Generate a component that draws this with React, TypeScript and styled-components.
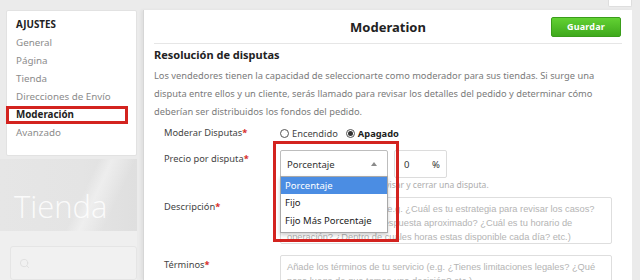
import { ReactElement } from 'react';
import styled, { createGlobalStyle } from 'styled-components';
import { Search } from 'lucide-react';

const GlobalStyle = createGlobalStyle`
    html, body {
        margin: 0;
        padding: 0;
    }

    body {
        background: #ebebeb;
        font-family: 'Noto Sans', 'Open Sans', sans-serif;
        width: 640px;
        height: 280px;
        overflow: hidden;
    }
`;

const Page = styled.div`
    width: 640px;
    height: 280px;
    display: flex;
    flex-direction: column;
    overflow: hidden;
`;

const TopStrip = styled.div`
    height: 10px;
    flex-shrink: 0;
    display: flex;
    justify-content: flex-end;
    padding-right: 8px;
`;

const CornerTab = styled.div`
    width: 22px;
    height: 6px;
    background: #fff;
    border: 1px solid #dedede;
    border-top: none;
    border-radius: 0 0 2px 2px;
`;

const Body = styled.div`
    display: flex;
    flex: 1;
    min-height: 0;
`;

const LeftCol = styled.aside`
    width: 137px;
    flex-shrink: 0;
    display: flex;
    flex-direction: column;
`;

const SideCard = styled.nav`
    margin-left: 6px;
    height: 147px;
    box-sizing: border-box;
    background: #fff;
    border: 1px solid #e2e2e2;
    border-radius: 2px;
    padding: 5px 0 0 9px;
`;

const SideItem = styled.div<{ $heading?: boolean; $active?: boolean }>`
    height: 18px;
    line-height: 18px;
    font-size: 9.8px;
    white-space: nowrap;
    color: ${p => (p.$heading || p.$active ? '#222' : '#8c8c8c')};
    font-weight: ${p => (p.$heading || p.$active ? 700 : 400)};
    ${p =>
        p.$active &&
        `
        margin-left: -10px;
        margin-right: 8px;
        padding-left: 10px;
        outline: 3px solid #d3231f;
        outline-offset: -3px;
    `}
`;

const Banner = styled.div`
    margin-top: 3px;
    height: 72px;
    box-sizing: border-box;
    background:
        linear-gradient(115deg, transparent 58%, rgba(255, 255, 255, 0.4) 66%, transparent 80%),
        linear-gradient(90deg, #e6e6e6 0%, #e4e4e4 60%, #dfdfdf 100%);
    padding: 27px 0 0 14px;
    font-family: 'Open Sans', 'Noto Sans', sans-serif;
    font-weight: 300;
    font-size: 31px;
    line-height: 40px;
    color: rgba(255, 255, 255, 0.85);
`;

const SearchArea = styled.div`
    flex: 1;
    background: #efefef;
    padding: 15px 0 0 10px;
`;

const SearchBox = styled.div`
    height: 34px;
    box-sizing: border-box;
    border: 1px solid #e5e5e5;
    border-radius: 3px;
    background: #f1f1f1;
    display: flex;
    align-items: center;
    padding-left: 8px;
    color: #dedede;
`;

const Panel = styled.main`
    width: 489px;
    margin-left: 6px;
    flex-shrink: 0;
    box-sizing: border-box;
    background: #fff;
    border-left: 1px solid #d6d6d6;
    box-shadow: -2px 0 3px rgba(0, 0, 0, 0.05);
    padding: 0 10px;
    display: flex;
    flex-direction: column;
`;

const Header = styled.header`
    height: 33px;
    flex-shrink: 0;
    display: grid;
    grid-template-columns: 1fr auto 1fr;
    align-items: center;
    border-bottom: 1px solid #e6e6e6;
`;

const Title = styled.h1`
    grid-column: 2;
    margin: 0;
    font-size: 13px;
    font-weight: 700;
    color: #222;
`;

const SaveButton = styled.button`
    grid-column: 3;
    justify-self: end;
    margin-right: 1px;
    width: 70px;
    height: 20px;
    border: 1px solid #3a9d1a;
    border-radius: 2px;
    background: linear-gradient(#62d133, #3fa91c);
    color: #fff;
    font-family: inherit;
    font-size: 9px;
    font-weight: 700;
    letter-spacing: 0.2px;
    padding: 0;
`;

const SectionTitle = styled.h2`
    margin: 3px 0 0;
    font-size: 11px;
    line-height: 16px;
    font-weight: 700;
    color: #222;
`;

const Intro = styled.p`
    margin: 4px 0 0;
    font-size: 9.3px;
    line-height: 18px;
    color: #7a7a7a;
    white-space: nowrap;
`;

const FormRow = styled.div<{ $gap: number }>`
    display: grid;
    grid-template-columns: 116px 1fr;
    padding: 0 10px;
    margin-top: ${p => p.$gap}px;
`;

const Label = styled.label<{ $pad?: number }>`
    font-size: 9.3px;
    line-height: 18px;
    color: #444;
    padding-top: ${p => p.$pad ?? 0}px;
    white-space: nowrap;
`;

const Req = styled.span`
    color: #d8302b;
    font-weight: 700;
`;

const RadioGroup = styled.div`
    display: flex;
    align-items: center;
    height: 18px;
    gap: 8px;
    font-size: 9.3px;
    color: #444;
`;

const RadioOption = styled.span<{ $checked?: boolean }>`
    display: flex;
    align-items: center;
    gap: 3px;
    font-weight: ${p => (p.$checked ? 700 : 400)};
    color: ${p => (p.$checked ? '#222' : '#444')};
`;

const RadioDot = styled.span<{ $checked?: boolean }>`
    width: 9px;
    height: 9px;
    box-sizing: border-box;
    border: 1px solid #555;
    border-radius: 50%;
    display: flex;
    align-items: center;
    justify-content: center;

    &::after {
        content: '';
        width: 5px;
        height: 5px;
        border-radius: 50%;
        background: ${p => (p.$checked ? '#333' : 'transparent')};
    }
`;

const PriceControls = styled.div`
    display: flex;
    flex-direction: column;
`;

const PriceInputs = styled.div`
    display: flex;
    gap: 6px;
`;

const SelectWrap = styled.div`
    position: relative;
    width: 108px;
`;

const SelectBox = styled.div`
    height: 28px;
    box-sizing: border-box;
    border: 1px solid #bdbdbd;
    border-radius: 2px;
    display: flex;
    align-items: center;
    justify-content: space-between;
    padding: 0 10px 0 6px;
    font-size: 9.5px;
    color: #333;
`;

const Caret = styled.span`
    width: 0;
    height: 0;
    border-left: 3.5px solid transparent;
    border-right: 3.5px solid transparent;
    border-bottom: 4px solid #8a8a8a;
`;

const OptionList = styled.ul`
    position: absolute;
    top: 26px;
    left: 0;
    width: 108px;
    box-sizing: border-box;
    margin: 0;
    padding: 0 0 2px;
    list-style: none;
    background: #fff;
    border: 1px solid #a8a8a8;
    box-shadow: 0 2px 4px rgba(0, 0, 0, 0.2);
    z-index: 2;
`;

const OptionItem = styled.li<{ $selected?: boolean }>`
    height: ${p => (p.$selected ? 17 : 18)}px;
    line-height: ${p => (p.$selected ? 17 : 18)}px;
    padding-left: 4px;
    font-size: 9.5px;
    white-space: nowrap;
    background: ${p => (p.$selected ? '#4b8de3' : 'transparent')};
    color: ${p => (p.$selected ? '#fff' : '#222')};
`;

const Annotation = styled.div`
    position: absolute;
    left: -7px;
    top: -9px;
    width: 126px;
    height: 101px;
    box-sizing: border-box;
    border: 3px solid #d3231f;
    pointer-events: none;
    z-index: 3;
`;

const AmountBox = styled.div`
    width: 53px;
    height: 28px;
    box-sizing: border-box;
    border: 1px solid #dcdcdc;
    border-radius: 2px;
    display: flex;
    align-items: center;
    justify-content: space-between;
    padding: 0 6px 0 9px;
    font-size: 9.5px;
    color: #333;
`;

const Helper = styled.div`
    margin-top: 1px;
    font-size: 8.5px;
    line-height: 12px;
    color: #adadad;
    white-space: nowrap;
`;

const TextBox = styled.div<{ $height: number }>`
    height: ${p => p.$height}px;
    box-sizing: border-box;
    border: 1px solid #dedede;
    border-radius: 2px;
    padding: 4px 6px 0;
    font-family: 'Liberation Sans', Arial, sans-serif;
    font-size: 9.3px;
    line-height: 14px;
    color: #b4b4b4;
    white-space: pre;
    overflow: hidden;
`;

export default function App(): ReactElement {
    return (
        <Page>
            <GlobalStyle />
            <TopStrip>
                <CornerTab />
            </TopStrip>
            <Body>
                <LeftCol>
                    <SideCard>
                        <SideItem $heading>AJUSTES</SideItem>
                        <SideItem>General</SideItem>
                        <SideItem>Página</SideItem>
                        <SideItem>Tienda</SideItem>
                        <SideItem>Direcciones de Envío</SideItem>
                        <SideItem $active>Moderación</SideItem>
                        <SideItem>Avanzado</SideItem>
                    </SideCard>
                    <Banner>Tienda</Banner>
                    <SearchArea>
                        <SearchBox>
                            <Search size={11} strokeWidth={2} />
                        </SearchBox>
                    </SearchArea>
                </LeftCol>

                <Panel>
                    <Header>
                        <Title>Moderation</Title>
                        <SaveButton>Guardar</SaveButton>
                    </Header>

                    <SectionTitle>Resolución de disputas</SectionTitle>
                    <Intro>
                        Los vendedores tienen la capacidad de seleccionarte como moderador para sus tiendas. Si surge una
                        <br />
                        disputa entre ellos y un cliente, serás llamado para revisar los detalles del pedido y determinar cómo
                        <br />
                        deberían ser distribuidos los fondos del pedido.
                    </Intro>

                    <FormRow $gap={3}>
                        <Label>
                            Moderar Disputas<Req>*</Req>
                        </Label>
                        <RadioGroup>
                            <RadioOption>
                                <RadioDot />
                                Encendido
                            </RadioOption>
                            <RadioOption $checked>
                                <RadioDot $checked />
                                Apagado
                            </RadioOption>
                        </RadioGroup>
                    </FormRow>

                    <FormRow $gap={8}>
                        <Label $pad={0}>
                            Precio por disputa<Req>*</Req>
                        </Label>
                        <PriceControls>
                            <PriceInputs>
                                <SelectWrap>
                                    <SelectBox>
                                        Porcentaje
                                        <Caret />
                                    </SelectBox>
                                    <OptionList>
                                        <OptionItem $selected>Porcentaje</OptionItem>
                                        <OptionItem>Fijo</OptionItem>
                                        <OptionItem>Fijo Más Porcentaje</OptionItem>
                                    </OptionList>
                                    <Annotation />
                                </SelectWrap>
                                <AmountBox>
                                    <span>0</span>
                                    <span>%</span>
                                </AmountBox>
                            </PriceInputs>
                            <Helper>La tarifa que cobras por revisar y cerrar una disputa.</Helper>
                        </PriceControls>
                    </FormRow>

                    <FormRow $gap={6}>
                        <Label $pad={1}>
                            Descripción<Req>*</Req>
                        </Label>
                        <TextBox $height={47}>
                            {'Añade una descripción (e.g. ¿Cuál es tu estrategia para revisar los casos?\n' +
                                '¿Cuál es tu tiempo de respuesta aproximado? ¿Cuál es tu horario de\n' +
                                'operación? ¿Dentro de cuáles horas estas disponible cada día? etc.)'}
                        </TextBox>
                    </FormRow>

                    <FormRow $gap={11}>
                        <Label $pad={1}>
                            Términos<Req>*</Req>
                        </Label>
                        <TextBox $height={40}>
                            {'Añade los términos de tu servicio (e.g. ¿Tienes limitaciones legales? ¿Qué\n' +
                                'pasa luego de que tomas una decisión? etc.)'}
                        </TextBox>
                    </FormRow>
                </Panel>
            </Body>
        </Page>
    );
}
